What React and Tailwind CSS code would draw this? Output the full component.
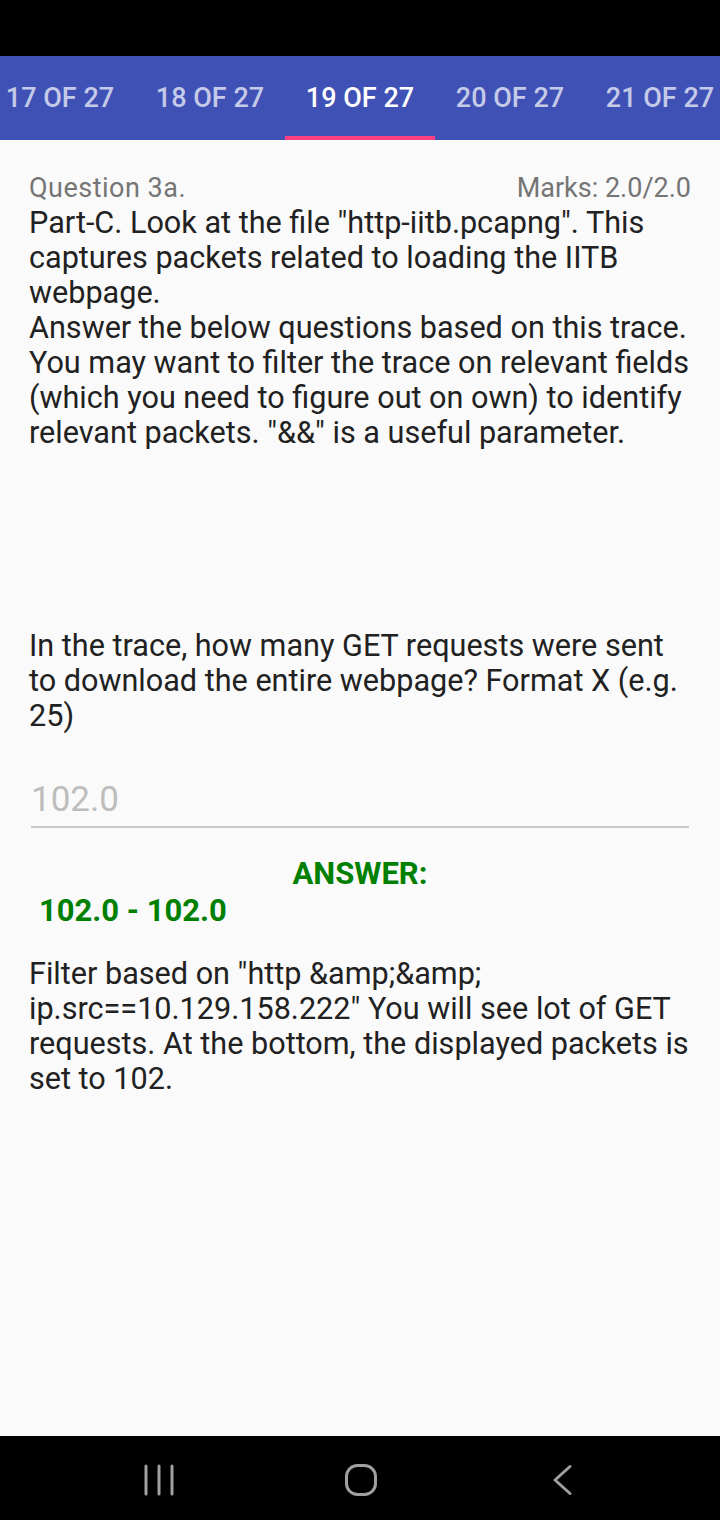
export default function App() {
    const tabs = ["17 OF 27", "18 OF 27", "19 OF 27", "20 OF 27", "21 OF 27"];

    return (
        <div className="w-[720px] h-[1520px] flex flex-col bg-[#fafafa] font-['Roboto',sans-serif] overflow-hidden">
            {/* Status bar */}
            <div className="h-[56px] bg-black shrink-0" />

            {/* Tabs */}
            <div className="h-[84px] bg-[#3f51b5] flex shrink-0 ml-[-15px]">
                {tabs.map((t, i) => (
                    <div key={t} className="w-[150px] shrink-0 flex flex-col">
                        <div
                            className={`flex-1 flex items-center justify-center text-[27px] font-medium pt-[4px] ${
                                i === 2 ? "text-white" : "text-[#c5cae9]"
                            }`}
                        >
                            {t}
                        </div>
                        <div className={`h-[4px] ${i === 2 ? "bg-[#ff4081]" : ""}`} />
                    </div>
                ))}
            </div>

            {/* Content */}
            <div className="flex-1 px-[29px] pt-[31px] text-[#212121]">
                <div className="flex justify-between text-[27px] leading-[34px] text-[#757575]">
                    <span className="tracking-[0.5px]">Question 3a.</span>
                    <span>Marks: 2.0/2.0</span>
                </div>
                <div className="text-[30.6px] leading-[35px] mr-[-4px]">
                    <p>Part-C. Look at the file "http-iitb.pcapng". This captures packets related to loading the IITB webpage.</p>
                    <p>Answer the below questions based on this trace. You may want to filter the trace on relevant fields (which you need to figure out on own) to identify relevant packets. "&amp;&amp;" is a useful parameter.</p>
                </div>

                <p className="text-[30.6px] leading-[35px] mt-[178px] mr-[-4px]">
                    In the trace, how many GET requests were sent to download the entire webpage? Format X (e.g. 25)
                </p>

                <div className="mx-[2px] mt-[47px] border-b-2 border-[#c8c8c8] pb-[6px]">
                    <div className="text-[35px] leading-[40px] text-[#bdbdbd]">102.0</div>
                </div>

                <div className="text-center text-[31px] leading-[36px] font-bold text-[#008000] mt-[28px]">
                    ANSWER:
                </div>
                <div className="text-[31px] leading-[38px] font-bold text-[#008000] pl-[10px]">
                    102.0 - 102.0
                </div>

                <p className="text-[30.6px] leading-[35px] mt-[26px] mr-[-4px]">
                    Filter based on "http &amp;amp;&amp;amp; ip.src==10.129.158.222" You will see lot of GET requests. At the bottom, the displayed packets is set to 102.
                </p>
            </div>

            {/* Navigation bar */}
            <div className="h-[84px] bg-black shrink-0 flex items-center justify-center gap-[162px] pl-[2px] pt-[4px]">
                <svg width="40" height="40" viewBox="0 0 40 40">
                    <g stroke="#a0a0a0" strokeWidth="3" strokeLinecap="round">
                        <line x1="7" y1="6" x2="7" y2="34" />
                        <line x1="20" y1="6" x2="20" y2="34" />
                        <line x1="33" y1="6" x2="33" y2="34" />
                    </g>
                </svg>
                <svg width="40" height="40" viewBox="0 0 40 40">
                    <rect x="5.5" y="5.5" width="29" height="29" rx="11" fill="none" stroke="#a0a0a0" strokeWidth="3" />
                </svg>
                <svg width="40" height="40" viewBox="0 0 40 40">
                    <polyline points="27,6.5 12,20 27,33.5" fill="none" stroke="#a0a0a0" strokeWidth="3" strokeLinecap="round" strokeLinejoin="round" />
                </svg>
            </div>
        </div>
    );
}
